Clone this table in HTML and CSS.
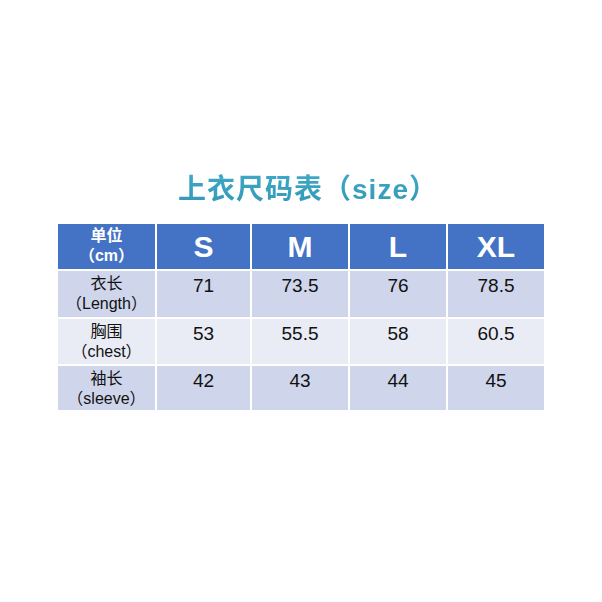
FILE: index.html
```html
<!DOCTYPE html>
<html lang="zh">
<head>
<meta charset="utf-8">
<link rel="stylesheet" href="styles.css">
</head>
<body>
<div class="page">
  <h1 class="title">上衣尺码表（size）</h1>
  <div class="chart">
    <div class="cell head unit">单位<br>（cm）</div>
    <div class="cell head size">S</div>
    <div class="cell head size">M</div>
    <div class="cell head size">L</div>
    <div class="cell head size">XL</div>

    <div class="cell dark label">衣长<br>（Length）</div>
    <div class="cell dark num">71</div>
    <div class="cell dark num">73.5</div>
    <div class="cell dark num">76</div>
    <div class="cell dark num">78.5</div>

    <div class="cell light label">胸围<br>（chest）</div>
    <div class="cell light num">53</div>
    <div class="cell light num">55.5</div>
    <div class="cell light num">58</div>
    <div class="cell light num">60.5</div>

    <div class="cell dark label">袖长<br>（sleeve）</div>
    <div class="cell dark num">42</div>
    <div class="cell dark num">43</div>
    <div class="cell dark num">44</div>
    <div class="cell dark num">45</div>
  </div>
</div>
</body>
</html>
```
FILE: styles.css
```css
html, body {
  margin: 0;
  padding: 0;
  background: #ffffff;
}
.page {
  width: 602px;
  height: 602px;
  display: flex;
  flex-direction: column;
  align-items: center;
  padding-top: 172px;
  box-sizing: border-box;
  font-family: "Liberation Sans", "Noto Sans CJK SC", sans-serif;
}
.title {
  margin: 0 0 0 14px;
  height: 52px;
  font-size: 28px;
  line-height: 36px;
  letter-spacing: 1px;
  font-weight: bold;
  color: #3399b6;
  background: linear-gradient(180deg, #3fa9c8 0%, #2c8fac 100%);
  -webkit-background-clip: text;
  background-clip: text;
  -webkit-text-fill-color: transparent;
}
.chart {
  display: grid;
  grid-template-columns: 97px 93px 96px 96px 96px;
  grid-template-rows: 45px 46px 45px 44px;
  gap: 2px;
}
.cell {
  text-align: center;
  box-sizing: border-box;
}
.head {
  background: #4472c4;
  color: #ffffff;
  font-weight: bold;
}
.dark { background: #cfd5ea; }
.light { background: #e9ebf5; }
.unit {
  font-size: 16px;
  line-height: 20px;
  padding-top: 2px;
}
.size {
  font-size: 30px;
  line-height: 45px;
}
.label {
  font-size: 16px;
  line-height: 20px;
  color: #111111;
  padding-top: 3px;
}
.num {
  font-size: 19px;
  line-height: 22px;
  padding-top: 4px;
  color: #111111;
}
```
